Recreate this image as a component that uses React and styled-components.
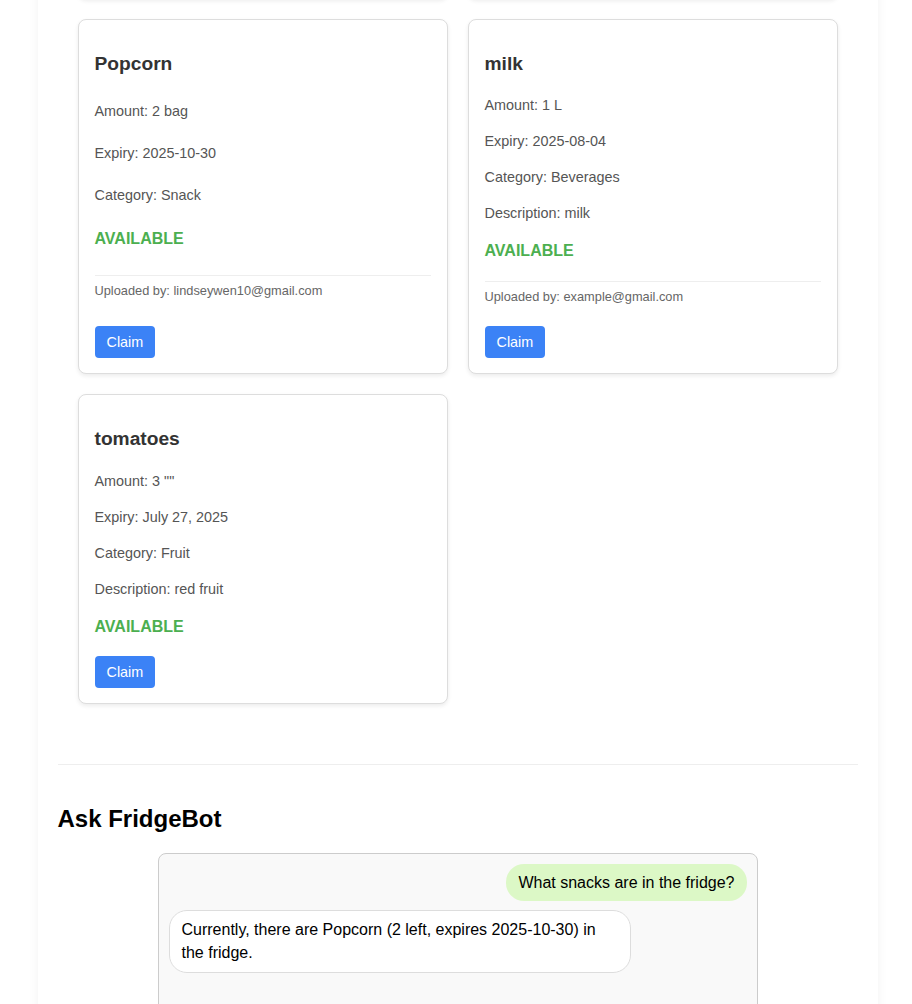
import React from "react";
import styled, { createGlobalStyle } from "styled-components";

const GlobalStyle = createGlobalStyle`
  html, body {
    margin: 0;
    padding: 0;
    background: #ffffff;
    font-family: "Liberation Sans", Arial, Helvetica, sans-serif;
  }
`;

const Page = styled.div`
  margin-top: -377px;
  padding-left: 3px;
`;

const Container = styled.main`
  max-width: 840px;
  margin: 0 auto;
  box-sizing: border-box;
  padding: 20px 20px 40px;
  background: #ffffff;
  box-shadow: 0 0 10px rgba(0, 0, 0, 0.06);
`;

const ItemsGrid = styled.section`
  display: grid;
  grid-template-columns: 1fr 1fr;
  gap: 20px;
  padding: 0 20px;
`;

const Card = styled.article`
  display: flex;
  flex-direction: column;
  justify-content: space-between;
  padding: 16px 16px 15px;
  background: #ffffff;
  border: 1px solid #dddddd;
  border-radius: 8px;
  box-shadow: 0 2px 4px rgba(0, 0, 0, 0.08);
`;

const Title = styled.h3`
  margin: 17px 0 12.7px;
  font-size: 19.2px;
  font-weight: 700;
  color: #333333;
`;

const Detail = styled.p`
  margin: 10px 0;
  font-size: 14.4px;
  color: #555555;
`;

const Status = styled.p`
  margin: 11px 0 10px;
  font-size: 16px;
  font-weight: 700;
  color: ${(p) => (p.$claimed ? "#e53935" : "#4caf50")};
`;

const Uploader = styled.p`
  margin: 11px 0 12px;
  padding-top: 7px;
  border-top: 1px solid #eeeeee;
  font-size: 12.8px;
  color: #666666;
`;

const ClaimButton = styled.button`
  align-self: flex-start;
  margin-top: 10px;
  padding: 8px 12px;
  border: none;
  border-radius: 4px;
  background: #3b82f6;
  color: #ffffff;
  font-family: inherit;
  font-size: 14.4px;
  cursor: pointer;
`;

const Divider = styled.hr`
  margin: 60px 0 40px;
  border: none;
  border-top: 1px solid #eeeeee;
`;

const SectionTitle = styled.h2`
  margin: 0 0 20px;
  font-size: 24px;
  font-weight: 700;
  color: #000000;
`;

const ChatBox = styled.div`
  width: 600px;
  height: 400px;
  margin: 0 auto;
  box-sizing: border-box;
  padding: 10px;
  display: flex;
  flex-direction: column;
  gap: 9px;
  background: #f9f9f9;
  border: 1px solid #cccccc;
  border-radius: 8px;
  overflow-y: auto;
`;

const Bubble = styled.div`
  max-width: 80%;
  box-sizing: border-box;
  padding: ${(p) => (p.$user ? "7.5px 12px" : "8px 12px")};
  font-size: 16px;
  line-height: 1.4;
  color: #000000;
  border-radius: 18px;
  align-self: ${(p) => (p.$user ? "flex-end" : "flex-start")};
  background: ${(p) => (p.$user ? "#dcf8c6" : "#ffffff")};
  border: ${(p) => (p.$user ? "none" : "1px solid #dddddd")};
`;

const items = [
  {
    name: "Apples",
    amount: "6 pcs",
    expiry: "2025-08-12",
    category: "Fruit",
    description: "green apples",
    uploader: "example@gmail.com",
  },
  {
    name: "Yogurt",
    amount: "4 cup",
    expiry: "2025-08-02",
    category: "Dairy",
    description: "plain yogurt",
    uploader: "example@gmail.com",
  },
  {
    name: "Popcorn",
    amount: "2 bag",
    expiry: "2025-10-30",
    category: "Snack",
    uploader: "lindseywen10@gmail.com",
  },
  {
    name: "milk",
    amount: "1 L",
    expiry: "2025-08-04",
    category: "Beverages",
    description: "milk",
    uploader: "example@gmail.com",
  },
  {
    name: "tomatoes",
    amount: '3 ""',
    expiry: "July 27, 2025",
    category: "Fruit",
    description: "red fruit",
  },
];

function ItemCard({ item }) {
  return (
    <Card>
      <Title>{item.name}</Title>
      <Detail>Amount: {item.amount}</Detail>
      <Detail>Expiry: {item.expiry}</Detail>
      <Detail>Category: {item.category}</Detail>
      {item.description && <Detail>Description: {item.description}</Detail>}
      <Status>AVAILABLE</Status>
      {item.uploader && <Uploader>Uploaded by: {item.uploader}</Uploader>}
      <ClaimButton>Claim</ClaimButton>
    </Card>
  );
}

export default function App() {
  return (
    <>
      <GlobalStyle />
      <Page>
        <Container>
          <ItemsGrid>
            {items.map((item) => (
              <ItemCard key={item.name} item={item} />
            ))}
          </ItemsGrid>
          <Divider />
          <SectionTitle>Ask FridgeBot</SectionTitle>
          <ChatBox>
            <Bubble $user>What snacks are in the fridge?</Bubble>
            <Bubble>
              Currently, there are Popcorn (2 left, expires 2025-10-30) in the
              fridge.
            </Bubble>
          </ChatBox>
        </Container>
      </Page>
    </>
  );
}
